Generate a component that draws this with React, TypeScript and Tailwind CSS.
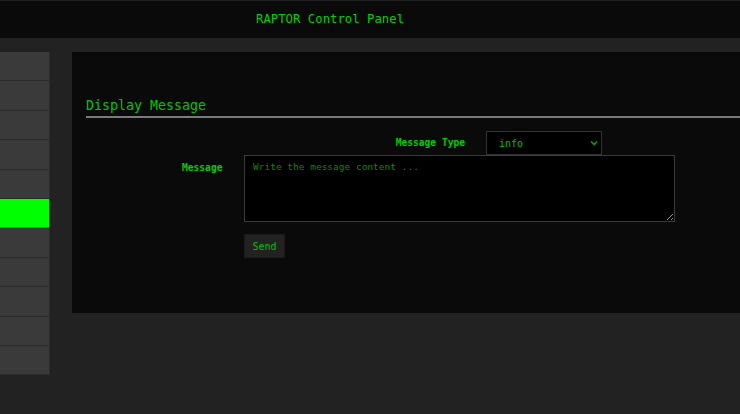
import React from "react";

const menu = ["", "", "", "", "", "", "", "", "", "", ""];
const ACTIVE = 5;

export default function App() {
  return (
    <div
      className="h-[414px] w-[740px] overflow-hidden bg-[#222222] text-[#00c000]"
      style={{ fontFamily: '"DejaVu Sans Mono", "Liberation Mono", monospace' }}
    >
      {/* header */}
      <div className="flex h-[38px] items-center border-t border-[#1e1e1e] bg-[#0a0a0a]">
        <span className="ml-[256px] text-[12.3px] text-[#00d000]">RAPTOR Control Panel</span>
      </div>

      <div className="mt-[14px] flex items-start">
        {/* sidebar */}
        <div className="flex w-[50px] flex-col border-r border-[#2c2c2c]">
          {menu.map((m, i) => (
            <div
              key={i}
              className={
                i === ACTIVE
                  ? "h-[29.4px] border-b border-[#1fa81f] bg-[#00ff00]"
                  : "h-[29.4px] border-b border-[#2c2c2c] bg-[#3a3a3a]"
              }
            >
              {m}
            </div>
          ))}
        </div>

        {/* main panel */}
        <div className="ml-[22px] h-[261px] flex-1 bg-[#0a0a0a] pl-[14px] pt-[45px]">
          <h2 className="border-b-2 border-[#7a7a7a] pb-[2px] text-[13.3px] leading-[17px] text-[#00c400]">
            Display Message
          </h2>

          <div className="mt-[13px] flex items-center">
            <label className="w-[379px] whitespace-nowrap text-right text-[9.6px] font-bold text-[#00cc00]">Message Type</label>
            <div className="relative ml-[21px] flex h-[24px] w-[116px] items-center border border-[#333] bg-black pl-[12px] text-[10px]">
              info
              <svg
                className="absolute right-[3px] top-[8px]"
                width="8"
                height="6"
                viewBox="0 0 8 6"
                fill="none"
                stroke="#00b000"
                strokeWidth="1.4"
              >
                <path d="M1 1.5 L4 4.5 L7 1.5" />
              </svg>
            </div>
          </div>

          <div className="flex items-start">
            <label className="ml-[96px] mt-[6px] w-[40px] whitespace-nowrap text-[9.6px] font-bold text-[#00cc00]">Message</label>
            <textarea
              placeholder="Write the message content ..."
              className="ml-[22px] h-[67px] w-[431px] border border-[#3a3a3a] bg-black px-[8px] py-[4px] text-[9.5px] text-[#00c000] outline-none placeholder:text-[#008c00]"
            />
          </div>

          <button className="ml-[158px] mt-[12px] h-[24px] w-[41px] border border-[#1a1a1a] bg-[#222222] text-[10px] text-[#00c000]">
            Send
          </button>
        </div>
      </div>
    </div>
  );
}
